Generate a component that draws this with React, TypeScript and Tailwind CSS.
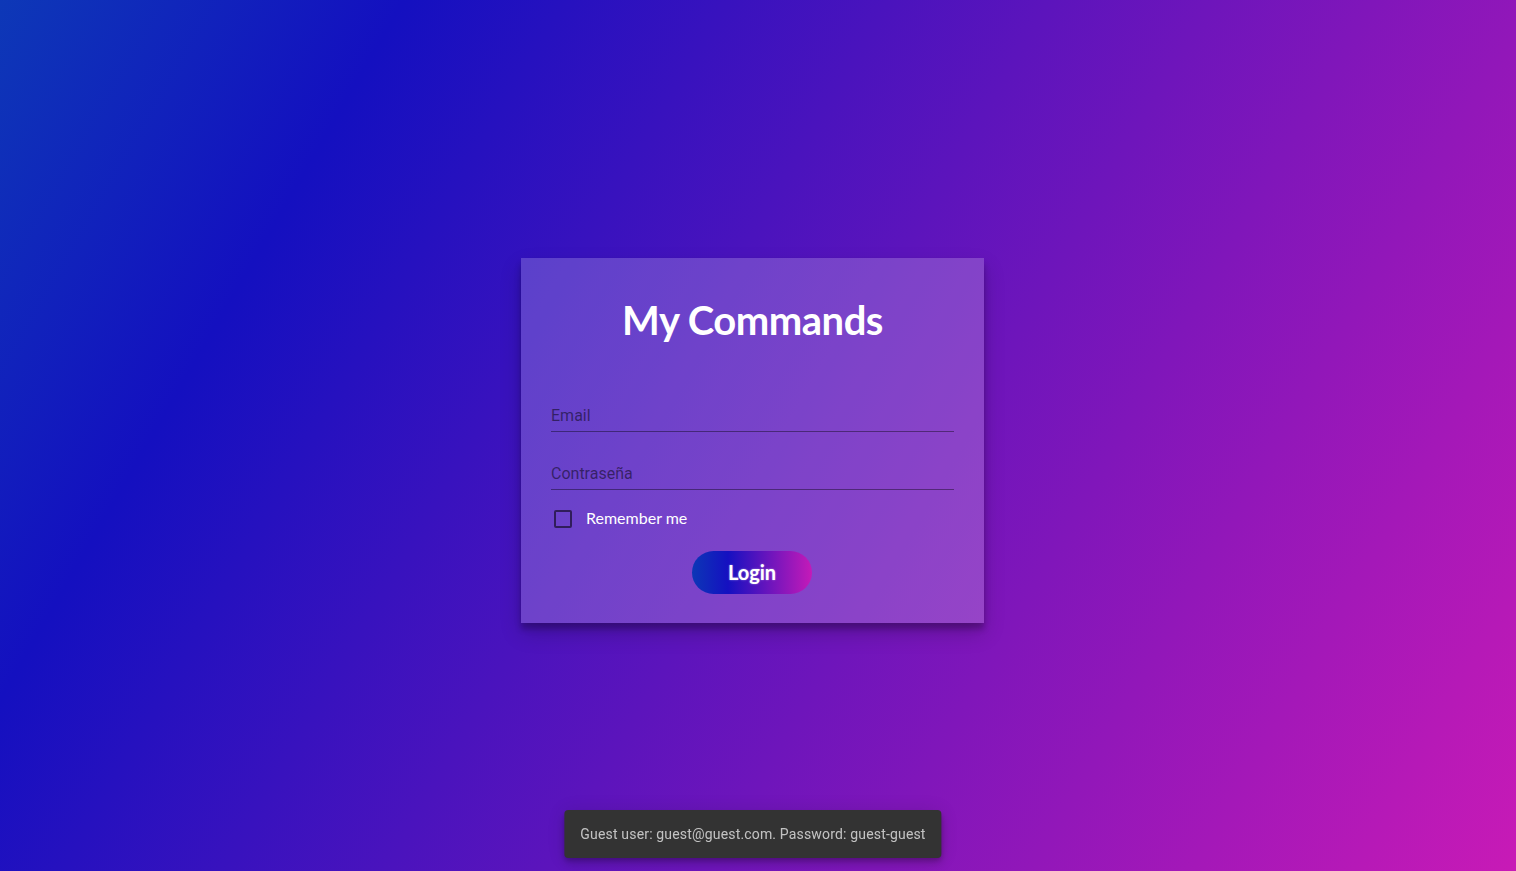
import React, { useState } from 'react';

const LoginCard: React.FC = () => {
    const [email, setEmail] = useState('');
    const [password, setPassword] = useState('');
    const [remember, setRemember] = useState(false);

    return (
        <div className="w-[463px] bg-white/20 px-[30px] pt-[37px] pb-[29px] shadow-[0_10px_20px_rgba(0,0,0,0.19),0_6px_6px_rgba(0,0,0,0.23)]">
            <h1 className="text-center text-[40px] leading-[50px] font-bold text-white font-['Lato','Liberation_Sans',sans-serif] tracking-[-0.5px]">
                My Commands
            </h1>

            <div className="mt-[29px] font-['Roboto','Liberation_Sans',sans-serif]">
                <div className="pt-[30px] pb-[3px] border-b border-black/40">
                    <input
                        type="email"
                        value={email}
                        onChange={e => setEmail(e.target.value)}
                        placeholder="Email"
                        className="block w-full h-6 leading-6 bg-transparent text-base text-black/80 placeholder:text-black/50 outline-none"
                    />
                </div>
                <div className="pt-[30px] pb-[3px] border-b border-black/40">
                    <input
                        type="password"
                        value={password}
                        onChange={e => setPassword(e.target.value)}
                        placeholder="Contraseña"
                        className="block w-full h-6 leading-6 bg-transparent text-base text-black/80 placeholder:text-black/50 outline-none"
                    />
                </div>
            </div>

            <label className="mt-[19px] mb-px flex items-center gap-[14px] pl-[3px] cursor-pointer">
                <span
                    onClick={() => setRemember(r => !r)}
                    className={`w-[18px] h-[18px] rounded-[2px] border-2 border-black/55 flex items-center justify-center ${remember ? 'bg-black/55' : ''}`}
                >
                    {remember && (
                        <svg width="12" height="12" viewBox="0 0 24 24" fill="none" stroke="white" strokeWidth="3">
                            <path d="M4 12l5 5L20 6" />
                        </svg>
                    )}
                </span>
                <span className="text-base leading-[18px] pb-[2px] text-white font-['Lato','Liberation_Sans',sans-serif]">Remember me</span>
            </label>

            <div className="mt-[22px] flex justify-center pr-px">
                <button className="w-[120px] h-[43px] rounded-full bg-[linear-gradient(90deg,#0c37b6_0%,#1510c1_30%,#c51ab8_100%)] text-white text-[20px] font-bold font-['Lato','Liberation_Sans',sans-serif] [text-shadow:0_0_2px_rgba(255,255,255,0.5)]">
                    Login
                </button>
            </div>
        </div>
    );
};

export default function App() {
    return (
        <div className="min-h-screen w-full bg-[linear-gradient(120deg,#0d38b7_0%,#1410c0_20%,#c81ab6_100%)]">
            <div className="min-h-screen flex items-center justify-center pr-[11px] pt-[9px]">
                <LoginCard />
            </div>

            <div className="fixed bottom-[13px] left-[753px] -translate-x-1/2 h-12 px-4 flex items-center rounded bg-[#333333] shadow-[0_3px_5px_-1px_rgba(0,0,0,0.2),0_6px_10px_0_rgba(0,0,0,0.14),0_1px_18px_0_rgba(0,0,0,0.12)]">
                <span className="text-sm tracking-[0.17px] text-white/70 whitespace-nowrap font-['Roboto','Liberation_Sans',sans-serif]">
                    Guest user: guest@guest.com. Password: guest-guest
                </span>
            </div>
        </div>
    );
}
